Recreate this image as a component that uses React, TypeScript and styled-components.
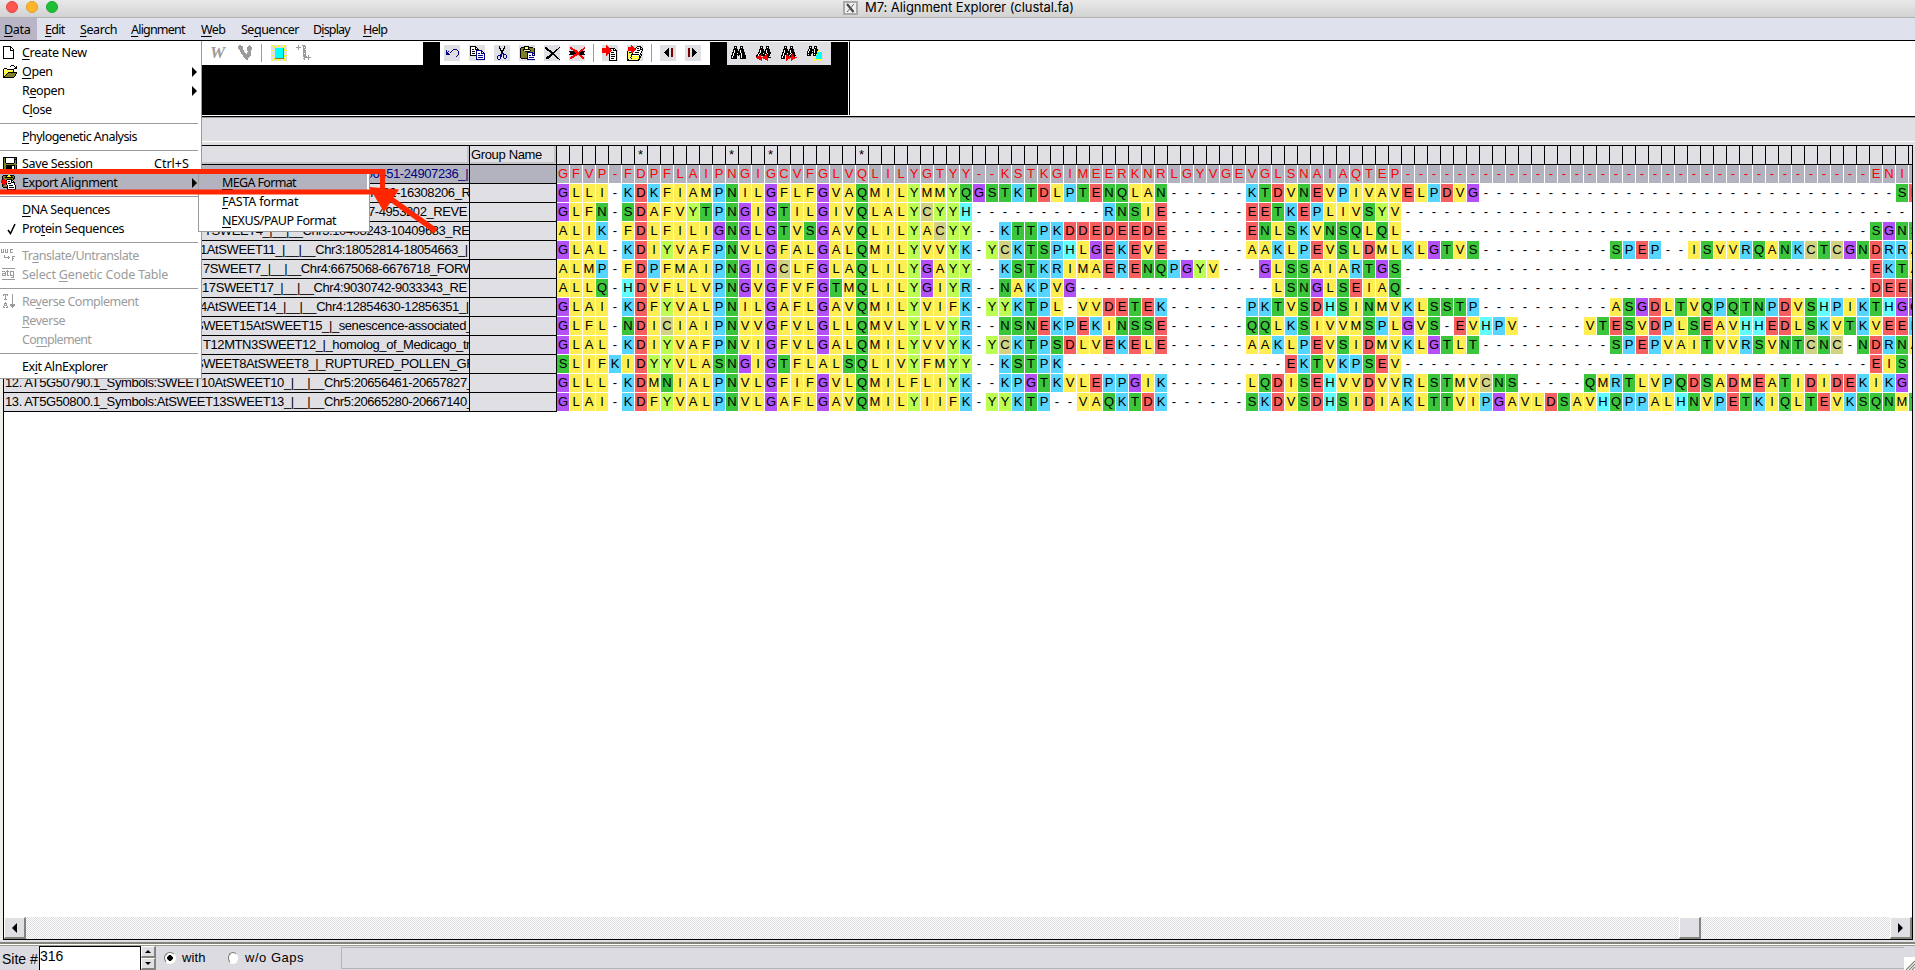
import React from "react";
import styled, { createGlobalStyle } from "styled-components";

const GlobalStyle = createGlobalStyle`
  html, body { margin: 0; padding: 0; background: #fff; overflow: hidden; }
  * { box-sizing: border-box; }
`;

const UI_FONT = '"Noto Sans", "DejaVu Sans", sans-serif';
const GRID_FONT = '"Liberation Sans", Arial, sans-serif';
const FACE = "#e0dfe4";
const SELECTED = "#b2b3bf";

/* ---------- data ---------- */

const sequences: string[] = [
  "GFVP-FDPFLAIPNGIGCVFGLVQLI" + "LYGTYY--KSTKGIMEERKNRLGYVGE" + "VGLSNAIAQTEP" + "-".repeat(36) + "ENI ",
  "GLLI-KDKFIAMPNILGFLFGVAQMI" + "LYMMYQGSTKTDLPTENQLAN------" + "KTDVNEVPIVAVELPDVG" + "-".repeat(32) + "SE",
  "GLFN-SDAFVYTPNGIGTILGIVQLA" + "LYCYYH----------RNSIE------" + "EETKEPLIVSYV" + "-".repeat(39) + " ",
  "ALIK-FDLFILIGNGLGTVSGAVQLI" + "LYACYY--KTTPKDDEDEEDE------" + "ENLSKVNSQLQL" + "-".repeat(36) + "SGNS",
  "GLAL-KDIYVAFPNVLGFALGALQMI" + "LYVVYK-YCKTSPHLGEKEVE------" + "AAKLPEVSLDMLKLGTVS" + "-".repeat(10) + "SPEP--ISVVRQANKCTCGNDRRA",
  "ALMP-FDPFMAIPNGIGCLFGLAQLI" + "LYGAYY--KSTKRIMAERENQPGYV--" + "-GLSSAIARTGS" + "-".repeat(36) + "EKTA",
  "ALLQ-HDVFLLVPNGVGFVFGTMQLI" + "LYGIYR--NAKPVG-------------" + "--LSNGLSEIAQ" + "-".repeat(36) + "DEEE",
  "GLAI-KDFYVALPNILGAFLGAVQMI" + "LYVIFK-YYKTPL-VVDETEK------" + "PKTVSDHSINMVKLSSTP" + "-".repeat(10) + "ASGDLTVQPQTNPDVSHPIKTHGG",
  "GLFL-NDICIAIPNVVGFVLGLLQMV" + "LYLVYR--NSNEKPEKINSSE------" + "QQLKSIVVMSPLGVS-EVHPV" + "-----" + "VTESVDPLSEAVHHEDLSKVTKVEEK",
  "GLAL-KDIYVAFPNVIGFVLGALQMI" + "LYVVYK-YCKTPSDLVEKELE------" + "AAKLPEVSIDMVKLGTLT" + "-".repeat(10) + "SPEPVAITVVRSVNTCNC-NDRNA",
  "SLIFKIDYYVLASNGIGTFLALSQLI" + "VYFMYY--KSTPK--------------" + "---EKTVKPSEV" + "-".repeat(36) + "EIS ",
  "GLLL-KDMNIALPNVLGFIFGVLQMI" + "LFLIYK--KPGTKVLEPPGIK------" + "LQDISEHVVDVVRLSTMVCNS" + "-----" + "QMRTLVPQDSADMEATIDIDEKIKG ",
  "GLAI-KDFYVALPNVLGAFLGAVQMI" + "LYIIFK-YYKTP--VAQKTDK------" + "SKDVSDHSIDIAKLTTVIPGAVLDSA" + "VHQPPALHNVPETKIQLTEVKSQNMT",
];

const names: { text: string; start: number }[] = [
  { text: "TSWEET2_|__|__Chr3:24906451-24907236_|", start: 213 },
  { text: "1SWEET2_|__|__Chr1:16307122-16308206_R", start: 210 },
  { text: "3AtSWEET3_|__|__Chr5:4951587-4953202_REVE", start: 184 },
  { text: "TSWEET4_|__|__Chr3:10408243-10409683_RE", start: 200 },
  { text: "1AtSWEET11_|__|__Chr3:18052814-18054663_|", start: 196 },
  { text: "7SWEET7_|__|__Chr4:6675068-6676718_FORW", start: 199 },
  { text: "17SWEET17_|__|__Chr4:9030742-9033343_RE", start: 198 },
  { text: "4AtSWEET14_|__|__Chr4:12854630-12856351_|", start: 196 },
  { text: "SWEET15AtSWEET15_|_senescence-associated_", start: 191 },
  { text: "T12MTN3SWEET12_|_homolog_of_Medicago_tr", start: 199 },
  { text: "SWEET8AtSWEET8_|_RUPTURED_POLLEN_GR", start: 191 },
  { text: "12. AT5G50790.1_Symbols:SWEET10AtSWEET10_|__|__Chr5:20656461-20657827_", start: 1 },
  { text: "13. AT5G50800.1_Symbols:AtSWEET13SWEET13_|__|__Chr5:20665280-20667140_", start: 1 },
];

const conserved = new Set([6, 13, 16, 23]);

const residueColor = (r: string): string => {
  if ("AVLIMF".includes(r)) return "#ffee51";
  if ("NQST".includes(r)) return "#3bc53b";
  if ("DE".includes(r)) return "#f55f5f";
  if ("KRP".includes(r)) return "#55d5ff";
  if (r === "G") return "#b350f8";
  if (r === "Y") return "#bcff52";
  if (r === "H") return "#62fdff";
  if (r === "C") return "#d2d283";
  return "#ffffff";
};

/* ---------- pixel icons ---------- */

const ink: Record<string, string> = {
  k: "#000000", n: "#000080", r: "#ff0000", m: "#800000", w: "#ffffff",
  y: "#ffff00", o: "#7f7f28", c: "#00ffff", g: "#9b9b9b", l: "#ffffa0",
};

const undo = [
  "", "", "", "", "         nnnn", "  n     n    n", "  n n  n      n", "  nn  n       n", "  nnn         n", "  nnnn        n", "             n", "            n", "", "", "", "",
];
const copy = [
  "", " kkkkkk", " kwwwwkk", " kwwwwkwk", " kwkkwkkkk", " kwwwwwnnnnnn", " kwkkkwnwwwwnn", " kwwwwwnwwwwnwn", " kwkkkwnwnnwnnnn", " kwwwwwnwwwwwwwn", " kkkkkknwnnnnnwn", "       nwwwwwwwn", "       nwnnnnnwn", "       nwwwwwwwn", "       nnnnnnnnn", "",
];
const cut = [
  "", "     k    k", "     k    k", "     kk  kk", "      k  k", "      kkkk", "       kk", "       kk", "       nnn", "      nn nnn", "    nnnn n  n", "   n  nn n  n", "   n  n  n  n", "   n  n   nn", "    nn", "",
];
const paste = [
  "", "     kkkkk", "  kkkklylkkkkk", " koooklllkoooook", " kookkkkkkkooook", " kookllllllkoook", " kooookkkkkooook", " koooooonnnnnnok", " koooooonwwwwnnk", " koooooonwwwwnwn", " koooooonwnnwnnnn", " koooooonwwwwwwwn", " koooooonwnnnnnwn", "  kkkkkknwwwwwwwn", "        nnnnnnnnn", "",
];
const del = [
  "", "", " kk            k", " kkk          k", "  kkk       kk", "   kkkk    kk", "     kkk  kk", "      kkkkk", "       kkk", "      kkkkk", "     kkk  kk", "   kkkk    kk", "  kkkk      kk", "  kkk        kk", "               k", "",
];
const delCol = [
  "", "", " rr            r", " rrr          rr", "  rrrr      rrr", "    rrrr   rrr", "kkkkkrrrr rrkkkk", " kkkkkrrrrrkkkk", " kkkkkkrrrkkkkk", "kkkkkrrrrrrkkkkk", "    rrrr  rrr", "  rrrr     rrr", " rrrr       rrr", " rr          rr", "", "",
];
const insertDoc = [
  "    r", "    rr", "    rrr", "rrrrrrrrkkkkk", "rrrrrrrrrwwkwk", "rrrrrrrrrrwkkkk", "rrrrrrrrrwwwwwk", "rrrrrrrrwkkkwwk", "    rrrkwwwwwwk", "    rr kwkkkkwk", "    r  kwwwwwwk", "       kwkkkkwk", "       kwwwwwwk", "       kwkkkwwk", "       kwwwwwwk", "       kkkkkkkk",
];
const insertFile = [
  "    r", "    rr    kkkk", " rrrrrr  kwwwkk", " rrrrrrrkwkkwkwk", " rrrrrrrrwwwwkkk", " rrrrrrrwwkkkwwk", "k   rrrwwwwwwwk", "kykkrrwwkkkkwwk", "kyylykwwwwwwwk", "klylkkkkkkkkwkk", "kylykwwwwwwwk k", "klylkylylylykk", "kylkylylylylkk", "klylkylylylyk", "kkylylylylykk", "kkkkkkkkkkkk",
];
const prev = [
  "", "", "", "        k  mm", "       kk  mm", "      kkk  mm", "     kkkk  mm", "    kkkkk  mm", "     kkkk  mm", "      kkk  mm", "       kk  mm", "        k  mm", "", "", "", "",
];
const next = [
  "", "", "", "   mm  k", "   mm  kk", "   mm  kkk", "   mm  kkkk", "   mm  kkkkk", "   mm  kkkk", "   mm  kkk", "   mm  kk", "   mm  k", "", "", "", "",
];
const find = [
  "", "   kkk   kkk", "   kwk   kwk", "   kkk   kkk", "  kkkkk kkkkk", "  kwkkk kwkkk", "  kwkkkkkwkkk", " kkwkkkkkwkkkk", " kwkkkwkkkwkkk", " kwkkkkkkkwkkk", "kkwkkk k kwkkkk", "kwkkkk   kwkkkk", "kwkkkk   kwkkkk", "kkkkkk   kkkkkk", "", "",
];
const findPrev = find.slice(0, 9).map((r) => " " + r).concat([" kwkkrkkkwrkkk", "kkwrrkkkkrrkkk", "krrrr  rrrrkk", "rrrrrrrrrrrrkkk", " rrrrr rrrrr", "   rrr   rrr", "     r     r"]);
const findNext = find.slice(0, 9).concat([" kwkkkrkkwkrkk", "kkwk rrk krrkkk", "kwkk rrrrkrrrk", "kwkk rrrrrrrrrrr", "kkkk rrrr rrrr", "     rr   rr", "     r    r"]);
const findMark = [
  "", "   kkk  kkk", "   kwk  kwk", "   kkk  kkk", "  kwkkkkwkkk", "  kwkkkkwkkky  y", " kwkkkwkwkkyyy y", " kwkkkkkwkkccccc", " kkkkk kkkkcccccy", " kwkk  kwkycccccy", " kkkk  kkkcccccco", "         ycccccco", "          ccccccy", "       yyycccccco", "          yyyyyy", "        y  y  y",
];
const newDoc = [
  "", "  kkkkkkkk", "  kwwwwwwkk", "  kwwwwwwkwk", "  kwwwwwwkwwk", "  kwwwwwwkkkk", "  kwwwwwwwwwk", "  kwwwwwwwwwk", "  kwwwwwwwwwk", "  kwwwwwwwwwk", "  kwwwwwwwwwk", "  kwwwwwwwwwk", "  kwwwwwwwwwk", "  kkkkkkkkkkk", "", "",
];
const folder = [
  "", "          kkk", "         k   k k", "              kk", "   kkk       kkk", "  klylkkkkkkk", "  klylylylylk", "  kylylylylyk", "  klylykkkkkkkkk", "  kylykooooooook", "  klykooooooook", "  kykoooooooook", "  kkoooooooook", "  kkkkkkkkkkk", "", "",
];
const disk = [
  "", "  kkkkkkkkkkkkkk", "  kokwwwwwwwwkok", "  kokwwwwwwwwkkk", "  kokwwwwwwwwkok", "  kokwwwwwwwwkok", "  kokwwwwwwwwkok", "  kookkkkkkkkook", "  koooooooooooook", "  kookkkkkkkkkok", "  kookkkkkkwwkok", "  kookkkkkkwwkok", "  kookkkkkkwwkok", "   kkkkkkkkkkkkk", "", "",
];
const exportIcon = [
  "  kkkkkyykkkk", " koookyyyykook", " kookkkkkkkkok", " kroooooooookk", " krrookkkkkok", "rrrrrkwwwwkk", "rrrrrrwkkwkwk", "rrrrrrwwwwkkkk", " rrrrkwkkkwwwk", " krrokwwwwwwwk", " kroo kwkkkkwwk", " kooookwwwwwwwk", "  kkkkkwkkkkkwk", "      kwwwwwwwk", "      kkkkkkkkk", "",
];
const translate = [
  "", "g g g g  ggg", "g g g g  g", "g g g g  g", "ggg ggg  ggg", "", "", "   g", "   g   g   ggg", "   gggggg  g", "       g   gg", "           g", "           g", "", "", "",
];
const codeTable = [
  "", " ggggggggggggg", "", "      g", " ggg ggg gggg", "    g g  g  g", " gggg g  g  g", " g  g g  g  g", " gggg gg gggg", "            g", "          ggg", "", " ggggggggggggg", "", "", "",
];
const revComp = [
  "  ggggg    g", "  g g g    g", "    g      g", "    g      g", "    g      g", "   ggg     g", "           g", "           g", "    g      g", "   ggg     g", "   g g   ggggg", "   ggg   ggggg", "  g   g   ggg", "  gg gg    g", "", "",
];
const vee = [
  "  gg        g", " ggggg     ggg", " ggggg    ggggg", " ggggg    ggggg", "  gggg    ggggg", "   gggg   gggg", "   gggg    ggg", "    gggg  gggg", "    ggggg gggg", "     ggggggggg", "      gggggggg", "      ggggggg", "       ggggg", "        ggg", "         gg", "",
];
const mark = [
  " yy    yy    yy", "  yy   yy   yy", "   yy      yy", "    cccccccco", "    ccccccccoyy", "yyy ccccccccoyyy", "    cccccccco", "    cccccccco", "    cccccccco", "    cccccccco", "yyy ccccccccoyyy", "    ccccccccoyy", "    cccccccco", "   yoooooooooyy", "  yy   yy   yy", " yy    yy    yy",
];
const align = [
  "  g   ggg", "  g    ggg", "ggggg  g g", "  g    ggg", "  g    gg", "       ggg", "       ggg", "       ggg", "       g g", "       ggg", "       ggg  g", "       gggg g", "        ggggggg", "       gg   g", "        g   g", "",
];

const IconSvg = styled.svg<{ $bg?: string }>`
  display: block;
  flex: none;
  width: 16px;
  height: 16px;
  background: ${(p) => p.$bg ?? "transparent"};
`;

const PixelIcon = ({ map, bg }: { map: string[]; bg?: string }) => (
  <IconSvg $bg={bg} viewBox="0 0 16 16" shapeRendering="crispEdges">
    {map.flatMap((row, y) =>
      [...row].map((ch, x) => (ink[ch] ? <rect key={`${x}-${y}`} x={x} y={y} width="1" height="1" fill={ink[ch]} /> : null))
    )}
  </IconSvg>
);

/* ---------- window chrome ---------- */

const Window = styled.div`
  position: relative;
  width: 1915px;
  height: 970px;
  display: flex;
  flex-direction: column;
  overflow: hidden;
  background: #fff;
  color: #000;
  white-space: nowrap;
`;

const TitleBar = styled.header`
  display: grid;
  grid-template-columns: 843px auto 1fr;
  height: 18px;
  background: linear-gradient(#e9e9e9, #d2d2d2);
  border-bottom: 1px solid #b1b0b1;
`;

const Lights = styled.div`
  display: flex;
  gap: 8px;
  padding: 1px 0 0 6px;
`;

const Light = styled.span<{ $c: string; $edge: string }>`
  width: 12px;
  height: 12px;
  border-radius: 50%;
  background: ${(p) => p.$c};
  border: 1px solid ${(p) => p.$edge};
`;

const XLogo = styled.span`
  width: 15px;
  height: 14px;
  margin: 1px 7px 0 0;
  border: 2px solid #aaa;
  background: #efefef;
  svg { display: block; }
`;

const Title = styled.span`
  font: 13px/15px Inter, "Liberation Sans", sans-serif;
  letter-spacing: -0.06px;
`;

const MenuBar = styled.nav`
  display: flex;
  height: 23px;
  flex: none;
  background: #dfe1ec;
  border-bottom: 1px solid #000;
  font: 12.5px/24px ${UI_FONT};
`;

const MenuTitle = styled.span<{ $w: number; $sp: number; $active?: boolean }>`
  width: ${(p) => p.$w}px;
  height: 22px;
  padding-left: 4px;
  letter-spacing: ${(p) => p.$sp}px;
  background: ${(p) => (p.$active ? "#b9b5c6" : "transparent")};
`;

const Key = styled.span`
  text-decoration: underline;
  text-decoration-thickness: 1px;
  text-underline-offset: 2px;
`;

/* Renders a label whose access key follows an ampersand. */
const Label = ({ text }: { text: string }) => {
  const i = text.indexOf("&");
  if (i < 0) return <>{text}</>;
  return (
    <>
      {text.slice(0, i)}
      <Key>{text[i + 1]}</Key>
      {text.slice(i + 2)}
    </>
  );
};

/* ---------- toolbars ---------- */

const Dock = styled.div`
  flex: none;
  width: 850px;
  height: 74px;
  border-top: 1px solid #fff;
  border-right: 1px solid #000;
  padding-right: 1px;
`;

const DockFill = styled.div`
  display: flex;
  height: 73px;
  background: #000;
`;

const ToolStrip = styled.div<{ $w: number; $bg?: string; $before?: number; $pad: number }>`
  display: flex;
  align-items: flex-start;
  gap: 9px;
  width: ${(p) => p.$w}px;
  height: 23px;
  margin-left: ${(p) => p.$before ?? 0}px;
  padding: 3px 0 0 ${(p) => p.$pad}px;
  background: ${(p) => p.$bg ?? "#fff"};
`;

const ToolSep = styled.span<{ $l?: number; $r?: number }>`
  width: 1px;
  height: 18px;
  margin: -1px ${(p) => p.$r ?? 0}px 0 ${(p) => p.$l ?? 0}px;
  background: #9b9b9b;
`;

const BoldW = styled.span`
  width: 18px;
  font: italic bold 17px/16px "Liberation Serif", serif;
  color: #9b9b9b;
`;

const Panel = styled.div`
  flex: none;
  height: 29px;
  margin-top: 1px;
  background: ${FACE};
  border-top: 1px solid #000;
  box-shadow: inset 0 1px 0 #9b9b9b, inset 0 -3px 0 ${FACE}, inset 0 -4px 0 #fffff4;
`;

/* ---------- alignment grid ---------- */

const GridFrame = styled.section`
  flex: none;
  height: 795px;
  margin: 0 2px 0 3px;
  border: 1px solid #000;
  display: flex;
  flex-direction: column;
  justify-content: space-between;
  box-shadow: -3px 0 0 #eeede8, 2px 0 0 ${FACE};
`;

const Table = styled.div`
  display: grid;
  grid-template-columns: 465px 1px 86px 1px 1355px;
  height: 266px;
`;

const Divider = styled.div`
  background: #000;
`;

const Column = styled.div`
  display: flex;
  flex-direction: column;
  overflow: hidden;
`;

const HeadCell = styled.div`
  height: 19px;
  flex: none;
  padding-left: 1px;
  background: ${FACE};
  border-bottom: 1px solid #000;
  box-shadow: inset -2px -2px 0 #c4c3c8;
  font: 13px/18px ${GRID_FONT};
  letter-spacing: -0.35px;
`;

const NameCell = styled.div<{ $selected?: boolean; $start?: number }>`
  height: 19px;
  flex: none;
  overflow: hidden;
  padding-left: ${(p) => p.$start ?? 0}px;
  background: ${(p) => (p.$selected ? SELECTED : FACE)};
  color: ${(p) => (p.$selected ? "#000080" : "#000")};
  border-bottom: 1px solid #000;
  font: 13px/18px ${GRID_FONT};
  letter-spacing: -0.41px;
`;

const Sites = styled.div`
  overflow: hidden;
`;

const SiteHead = styled.div`
  display: flex;
  gap: 1px;
  width: 1365px;
  height: 19px;
  background: #000;
  border-bottom: 1px solid #000;
`;

const SiteMark = styled.span`
  width: 12px;
  flex: none;
  padding-right: 1px;
  background: ${FACE};
  text-align: center;
  font: 13px/18px ${GRID_FONT};
`;

const SeqRow = styled.div`
  display: flex;
  gap: 1px;
  width: 1365px;
  height: 19px;
`;

const Residue = styled.span<{ $bg: string; $selected?: boolean }>`
  width: 12px;
  height: 18px;
  flex: none;
  text-align: center;
  font: 13px/18px ${GRID_FONT};
  background: ${(p) => p.$bg};
  color: ${(p) => (p.$selected ? "#ff0000" : "#000")};
`;

const ScrollBar = styled.div`
  display: flex;
  height: 22px;
  background: repeating-conic-gradient(#dcdce0 0 25%, #fff 0 50%) 0 0 / 2px 2px;
`;

const Bevel = styled.div<{ $w: number; $h: number }>`
  display: flex;
  align-items: center;
  justify-content: center;
  flex: none;
  width: ${(p) => p.$w}px;
  height: ${(p) => p.$h}px;
  background: ${FACE};
  border: 1px solid #fffff4;
  border-right: 2px solid #84847c;
  border-bottom: 2px solid #84847c;
`;

const TrackGap = styled.div<{ $w?: number }>`
  ${(p) => (p.$w ? `width: ${p.$w}px;` : "flex: 1;")}
`;

/* ---------- status bar ---------- */

const Ridge = styled.div`
  flex: none;
  height: 6px;
  background: linear-gradient(${FACE} 0 2px, #84847c 2px 4px, #fffff4 4px 5px, #9b9b9b 5px 6px);
`;

const StatusBar = styled.footer`
  display: flex;
  flex: 1;
  background: #dcdbe1;
  font: 14px/24px ${GRID_FONT};
  overflow: hidden;
`;

const SiteLabel = styled.span`
  width: 39px;
  padding: 1px 0 0 2px;
`;

const SiteInput = styled.span`
  width: 102px;
  background: #fff;
  border: 1px solid #000;
  border-bottom: 0;
  font: 14px/18px ${GRID_FONT};
`;

const Spinner = styled.div`
  display: flex;
  flex-direction: column;
  width: 23px;
`;

const RadioLabel = styled.span<{ $w: number; $sp: number; $gap: number }>`
  display: flex;
  gap: ${(p) => p.$gap}px;
  width: ${(p) => p.$w}px;
  font: 13px/24px ${GRID_FONT};
  letter-spacing: ${(p) => p.$sp}px;
`;

const Radio = styled.span<{ $on?: boolean }>`
  width: 12px;
  height: 12px;
  margin-top: 6px;
  border-radius: 50%;
  border: 1px solid;
  border-color: #77776f #fffff4 #fffff4 #77776f;
  background: ${(p) => (p.$on ? "radial-gradient(circle, #000 0 2.6px, #fff 3px)" : "#fff")};
`;

const StatusField = styled.div`
  flex: 1;
  height: 22px;
  margin: 1px 0 0 37px;
  border: 1px solid #b5b4b9;
  border-right: 0;
`;

const Grip = styled.svg`
  display: block;
  width: 11px;
  height: 13px;
  margin-top: 11px;
  background: #fff;
`;

/* ---------- drop-down menus ---------- */

const DropDown = styled.div`
  position: absolute;
  left: 0;
  top: 41px;
  width: 202px;
  height: 338px;
  padding-top: 2px;
  background: #fff;
  border-right: 1px solid #9b9b9b;
  border-bottom: 1px solid #9b9b9b;
  font: 12.5px/17px ${UI_FONT};
`;

const SubMenu = styled.div`
  position: absolute;
  left: 198px;
  top: 173px;
  width: 172px;
  height: 59px;
  background: #fff;
  border: 1px solid #9b9b9b;
  border-top: 0;
  font: 12.5px/20px ${UI_FONT};
`;

const Item = styled.div<{ $selected?: boolean; $disabled?: boolean; $sp?: number }>`
  display: flex;
  align-items: center;
  height: 19px;
  width: 198px;
  padding-right: 1px;
  background: ${(p) => (p.$selected ? SELECTED : "transparent")};
  color: ${(p) => (p.$disabled ? "#9b9b9b" : "#000")};
  letter-spacing: ${(p) => p.$sp ?? 0}px;
`;

const Slot = styled.span`
  width: 22px;
  padding-left: 1px;
  flex: none;
`;

const Check = styled.svg`
  display: block;
  width: 10px;
  height: 12px;
  margin-left: 6px;
`;

const ItemText = styled.span`
  flex: 1;
`;

const Shortcut = styled.span`
  width: 43px;
  letter-spacing: 0;
`;

const Separator = styled.div`
  width: 198px;
  height: 8px;
  background: linear-gradient(transparent 4px, #9b9b9b 4px 5px, transparent 5px);
`;

const SubItem = styled.div<{ $selected?: boolean; $sp: number }>`
  height: 19px;
  width: 168px;
  padding-left: 23px;
  background: ${(p) => (p.$selected ? SELECTED : "transparent")};
  letter-spacing: ${(p) => p.$sp}px;
`;

const Triangle = styled.span<{ $dir: "left" | "right" | "up" | "down"; $a: number; $b: number }>`
  width: 0;
  height: 0;
  flex: none;
  border: ${(p) => p.$a}px solid transparent;
  ${(p) => {
    const opposite = { left: "right", right: "left", up: "bottom", down: "top" }[p.$dir];
    return `border-${opposite}: ${p.$b}px solid #000; border-${p.$dir === "up" ? "top" : p.$dir === "down" ? "bottom" : p.$dir}: 0;`;
  }}
`;

const Callout = styled.svg`
  position: absolute;
  left: 0;
  top: 160px;
  width: 450px;
  height: 90px;
`;

type Entry = "-" | { t: string; icon?: string[]; sp?: number; sub?: boolean; key?: string; off?: boolean; check?: boolean; sel?: boolean };

const dataMenu: Entry[] = [
  { t: "&Create New", icon: newDoc, sp: -0.3 },
  { t: "&Open", icon: folder, sub: true, sp: -0.4 },
  { t: "R&eopen", sub: true, sp: -0.4 },
  { t: "C&lose", sp: -0.4 },
  "-",
  { t: "&Phylogenetic Analysis", sp: -0.55 },
  "-",
  { t: "&Save Session", icon: disk, key: "Ctrl+S", sp: -0.35 },
  { t: "Export Alignment", icon: exportIcon, sub: true, sel: true, sp: -0.45 },
  "-",
  { t: "&DNA Sequences", sp: -0.4 },
  { t: "Pro&tein Sequences", check: true, sp: -0.4 },
  "-",
  { t: "Tr&anslate/Untranslate", icon: translate, off: true, sp: -0.5 },
  { t: "Select &Genetic Code Table", icon: codeTable, off: true, sp: -0.16 },
  "-",
  { t: "Re&verse Complement", icon: revComp, off: true, sp: -0.5 },
  { t: "&Reverse", off: true, sp: -0.45 },
  { t: "Co&mplement", off: true, sp: -0.7 },
  "-",
  { t: "Ex&it AlnExplorer", sp: -0.45 },
];

export default function App() {
  return (
    <Window>
      <GlobalStyle />
      <TitleBar>
        <Lights>
          <Light $c="#ff5650" $edge="#e2443e" />
          <Light $c="#ffb429" $edge="#dfa023" />
          <Light $c="#1ebf36" $edge="#18a92b" />
        </Lights>
        <XLogo>
          <svg width="11" height="10" viewBox="0 0 11 10" fill="none">
            <path d="M2 1 8.5 9" stroke="#444" strokeWidth="2.2" />
            <path d="M9 1 2 9" stroke="#666" strokeWidth="1" />
          </svg>
        </XLogo>
        <Title>M7: Alignment Explorer (clustal.fa)</Title>
      </TitleBar>

      <MenuBar>
        <MenuTitle $w={37} $sp={-0.3} $active><Label text="&Data" /></MenuTitle>
        <MenuTitle $w={2} $sp={0} />
        <MenuTitle $w={35} $sp={-0.7}><Label text="&Edit" /></MenuTitle>
        <MenuTitle $w={51} $sp={-0.4}><Label text="&Search" /></MenuTitle>
        <MenuTitle $w={70} $sp={-0.8}><Label text="&Alignment" /></MenuTitle>
        <MenuTitle $w={40} $sp={-0.6}><Label text="&Web" /></MenuTitle>
        <MenuTitle $w={72} $sp={-0.5}><Label text="Se&quencer" /></MenuTitle>
        <MenuTitle $w={50} $sp={-0.85}><Label text="D&isplay" /></MenuTitle>
        <MenuTitle $w={40} $sp={-0.8}><Label text="&Help" /></MenuTitle>
      </MenuBar>

      <Dock>
        <DockFill>
          <ToolStrip $w={423} $pad={210}>
            <BoldW>W</BoldW>
            <PixelIcon map={vee} />
            <ToolSep $l={-1} />
            <PixelIcon map={mark} bg={FACE} />
            <PixelIcon map={align} />
          </ToolStrip>
          <ToolStrip $w={270} $pad={4} $before={17}>
            <PixelIcon map={undo} bg={FACE} />
            <PixelIcon map={copy} bg={FACE} />
            <PixelIcon map={cut} bg={FACE} />
            <PixelIcon map={paste} bg={FACE} />
            <PixelIcon map={del} bg={FACE} />
            <PixelIcon map={delCol} bg={FACE} />
            <ToolSep $l={-1} $r={-1} />
            <PixelIcon map={insertDoc} bg={FACE} />
            <PixelIcon map={insertFile} bg={FACE} />
            <ToolSep $l={-1} $r={-1} />
            <PixelIcon map={prev} bg={FACE} />
            <PixelIcon map={next} bg={FACE} />
          </ToolStrip>
          <ToolStrip $w={104} $pad={4} $before={17} $bg={FACE}>
            <PixelIcon map={find} />
            <PixelIcon map={findPrev} />
            <PixelIcon map={findNext} />
            <PixelIcon map={findMark} />
          </ToolStrip>
        </DockFill>
      </Dock>

      <Panel />

      <GridFrame>
        <Table>
          <Column>
            <HeadCell />
            {names.map((n, i) => (
              <NameCell key={i} $start={n.start} $selected={i === 0}>{n.text}</NameCell>
            ))}
          </Column>
          <Divider />
          <Column>
            <HeadCell>Group Name</HeadCell>
            {names.map((_, i) => (
              <NameCell key={i} $selected={i === 0} />
            ))}
          </Column>
          <Divider />
          <Sites>
            <SiteHead>
              {Array.from({ length: 105 }, (_, i) => (
                <SiteMark key={i}>{conserved.has(i) ? "*" : ""}</SiteMark>
              ))}
            </SiteHead>
            {sequences.map((s, r) => (
              <SeqRow key={r}>
                {[...s].map((ch, i) => (
                  <Residue key={i} $bg={r === 0 ? SELECTED : residueColor(ch)} $selected={r === 0}>{ch}</Residue>
                ))}
              </SeqRow>
            ))}
          </Sites>
        </Table>
        <ScrollBar>
          <Bevel $w={22} $h={22}><Triangle $dir="left" $a={5} $b={5} /></Bevel>
          <TrackGap />
          <Bevel $w={22} $h={22} />
          <TrackGap $w={189} />
          <Bevel $w={22} $h={22}><Triangle $dir="right" $a={5} $b={5} /></Bevel>
        </ScrollBar>
      </GridFrame>

      <Ridge />
      <StatusBar>
        <SiteLabel>Site #</SiteLabel>
        <SiteInput>316</SiteInput>
        <Spinner>
          <Bevel $w={15} $h={12}><Triangle $dir="up" $a={3} $b={3} /></Bevel>
          <Bevel $w={15} $h={12}><Triangle $dir="down" $a={3} $b={3} /></Bevel>
        </Spinner>
        <RadioLabel $w={64} $sp={0.1} $gap={6}><Radio $on />with</RadioLabel>
        <RadioLabel $w={76} $sp={0.5} $gap={7}><Radio />w/o Gaps</RadioLabel>
        <StatusField />
        <Grip viewBox="0 0 11 13">
          <path d="M2 13 11 4M5 13 11 7M8 13 11 10" stroke="#84847c" strokeWidth="1.2" />
        </Grip>
      </StatusBar>

      <DropDown>
        {dataMenu.map((e, i) =>
          e === "-" ? (
            <Separator key={i} />
          ) : (
            <Item key={i} $selected={e.sel} $disabled={e.off} $sp={e.sp}>
              <Slot>
                {e.icon && <PixelIcon map={e.icon} />}
                {e.check && (
                  <Check viewBox="0 0 10 12">
                    <path d="M1 7 3.5 10.5 8 1" fill="none" stroke="#000" strokeWidth="1.5" />
                  </Check>
                )}
              </Slot>
              <ItemText><Label text={e.t} /></ItemText>
              {e.key && <Shortcut>{e.key}</Shortcut>}
              {e.sub && <Triangle $dir="right" $a={5} $b={5} />}
            </Item>
          )
        )}
      </DropDown>
      <SubMenu>
        <SubItem $selected $sp={-0.65}><Label text="&MEGA Format" /></SubItem>
        <SubItem $sp={-0.2}><Label text="&FASTA format" /></SubItem>
        <SubItem $sp={-0.45}><Label text="&NEXUS/PAUP Format" /></SubItem>
      </SubMenu>

      <Callout viewBox="0 160 450 90">
        <path d="M-5 171.5H382.5V192H-5" fill="none" stroke="#ff2600" strokeWidth="5" />
        <path d="M388 197 436 231" stroke="#ff2600" strokeWidth="5.5" />
        <path d="M369 187 399 189.5 384 212Z" fill="#ff2600" />
      </Callout>
    </Window>
  );
}
